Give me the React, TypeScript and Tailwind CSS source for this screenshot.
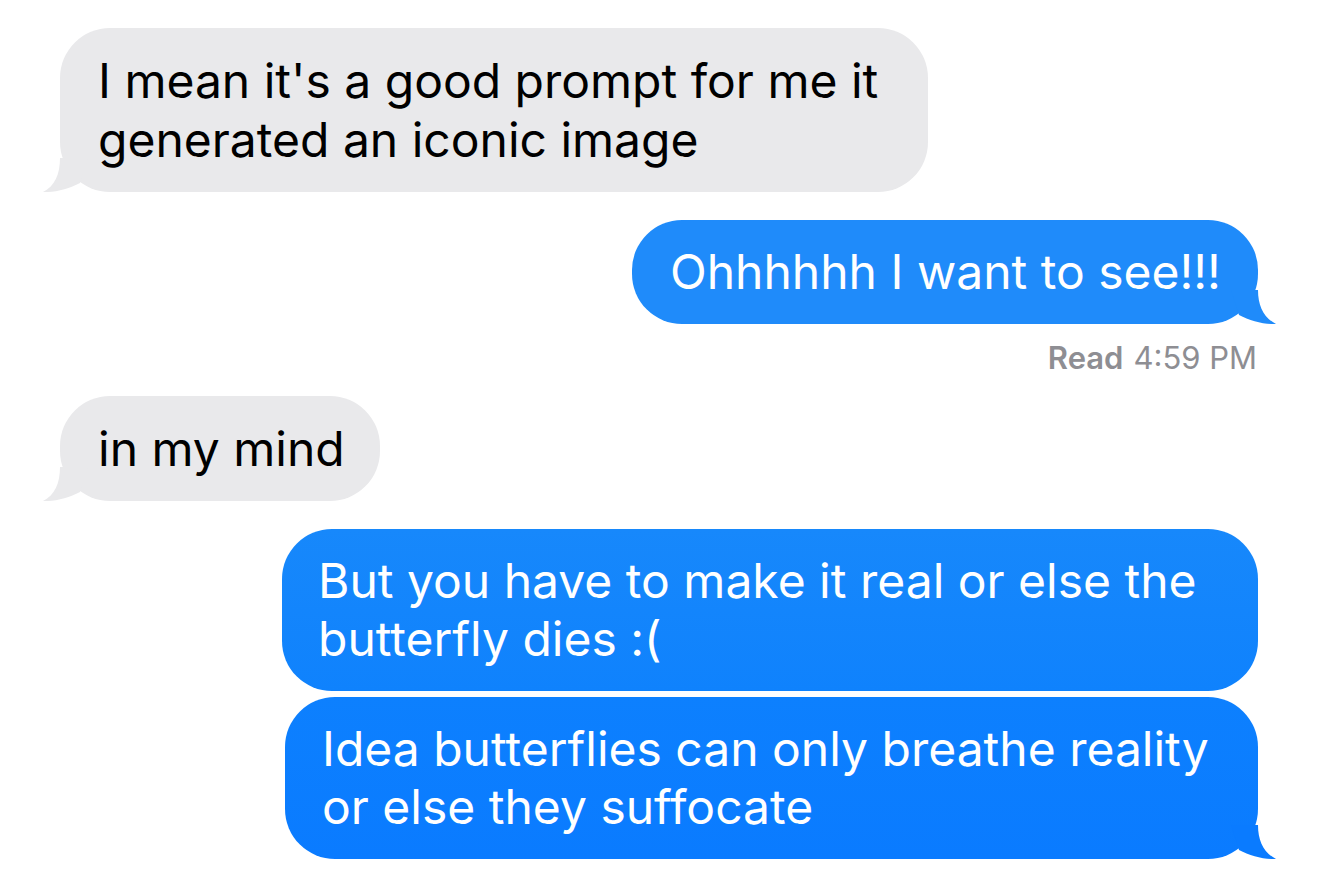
import React from "react";

function LeftTail() {
  return (
    <svg
      className="absolute left-[-17px] bottom-0"
      width="46"
      height="34"
      viewBox="0 0 46 34"
    >
      <path d="M17 0 C17 16 12 28 0 34 C12 34.5 26 31 37 25 L45 0 Z" fill="#e9e9eb" />
    </svg>
  );
}

function RightTail({ color }: { color: string }) {
  return (
    <svg
      className="absolute right-[-18px] bottom-0 -scale-x-100"
      width="46"
      height="34"
      viewBox="0 0 46 34"
    >
      <path d="M18 0 C18 16 12 28 0 34 C12 34.5 26 31 37 25 L45 0 Z" fill={color} />
    </svg>
  );
}

function Received({ lines, w }: { lines: string[]; w: string }) {
  return (
    <div className="flex justify-start pl-[60px]">
      <div className={`relative bg-[#e9e9eb] rounded-[50px] pl-[38px] py-[23px] text-black text-[48px] leading-[59px] ${w}`}>
        {lines.map((l) => (
          <div key={l} className="relative whitespace-nowrap">{l}</div>
        ))}
        <LeftTail />
      </div>
    </div>
  );
}

function Sent({
  lines,
  bg,
  tailColor,
  pl,
  w,
  tail = true,
}: {
  lines: string[];
  bg: string;
  tailColor: string;
  pl: string;
  w: string;
  tail?: boolean;
}) {
  return (
    <div className="flex justify-end pr-[62px]">
      <div className={`relative rounded-[50px] ${pl} py-[23px] text-white text-[48px] leading-[58px] ${w} ${bg}`}>
        {lines.map((l) => (
          <div key={l} className="relative whitespace-nowrap">{l}</div>
        ))}
        {tail && <RightTail color={tailColor} />}
      </div>
    </div>
  );
}

export default function App() {
  return (
    <div className="w-[1320px] h-[875px] bg-white overflow-hidden pt-[28px] font-['Inter',sans-serif]">
      <Received
        lines={["I mean it's a good prompt for me it", "generated an iconic image"]}
        w="w-[868px]"
      />

      <div className="mt-[28px]">
        <Sent
          lines={["Ohhhhhh I want to see!!!"]}
          bg="bg-[#1f8bfa]"
          tailColor="#1f8bfa"
          pl="pl-[38px]"
          w="w-[626px]"
        />
      </div>

      <div className="mt-[17px] flex justify-end pr-[63px] text-[31px] leading-[34px] text-[#8e8e93]">
        <span className="font-semibold">Read</span>
        <span className="ml-[10px]">4:59 PM</span>
      </div>

      <div className="mt-[21px]">
        <Received lines={["in my mind"]} w="w-[320px]" />
      </div>

      <div className="mt-[28px]">
        <Sent
          lines={["But you have to make it real or else the", "butterfly dies :("]}
          bg="bg-gradient-to-b from-[#1788fb] to-[#0f82fd]"
          tailColor="#0f82fd"
          pl="pl-[36px]"
          w="w-[976px]"
          tail={false}
        />
      </div>

      <div className="mt-[6px]">
        <Sent
          lines={["Idea butterflies can only breathe reality", "or else they suffocate"]}
          bg="bg-gradient-to-b from-[#0d80fe] to-[#0a7bff]"
          tailColor="#0a7bff"
          pl="pl-[37px]"
          w="w-[973px]"
        />
      </div>
    </div>
  );
}
